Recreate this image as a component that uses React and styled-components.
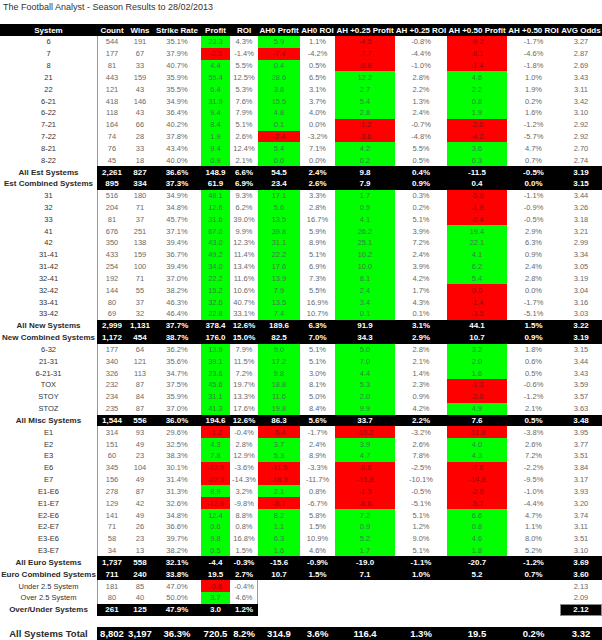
import React from 'react'
import styled, { createGlobalStyle } from 'styled-components'

const GlobalStyle = createGlobalStyle`
  body {
    margin: 0;
    background: #fff;
    font-family: "Liberation Sans", Arial, sans-serif;
  }
`

const COLS = '97px 30px 26px 48px 29px 28px 42px 35px 60px 52px 60px 53px 42px'

const HEADERS = [
  'System', 'Count', 'Wins', 'Strike Rate', 'Profit', 'ROI', 'AH0 Profit', 'AH0 ROI',
  'AH +0.25 Profit', 'AH +0.25 ROI', 'AH +0.50 Profit', 'AH +0.50 ROI', 'AVG Odds',
]

// columns that get the green / red fill
const PROFIT_COLS = [4, 6, 8, 10]

const SECTIONS = [
  {
    rows: [
      '6|544|191|35.1%|23.3|4.3%|5.9|1.1%|-4.5|-0.8%|-9.2|-1.7%|3.27',
      '7|177|67|37.9%|-2.5|-1.4%|-7.4|-4.2%|-7.7|-4.4%|-8.1|-4.6%|2.87',
      '8|81|33|40.7%|4.4|5.5%|0.4|0.5%|-0.8|-1.0%|-1.4|-1.8%|2.69',
      '21|443|159|35.9%|55.4|12.5%|28.6|6.5%|12.2|2.8%|4.6|1.0%|3.43',
      '22|121|43|35.5%|6.4|5.3%|3.8|3.1%|2.7|2.2%|2.2|1.9%|3.11',
      '6-21|418|146|34.9%|31.9|7.6%|15.5|3.7%|5.4|1.3%|0.8|0.2%|3.42',
      '6-22|118|43|36.4%|9.4|7.9%|4.8|4.0%|2.8|2.4%|1.9|1.6%|3.10',
      '7-21|164|66|40.2%|8.4|5.1%|0.1|0.0%|-1.2|-0.7%|-2.0|-1.2%|2.92',
      '7-22|74|28|37.8%|1.9|2.6%|-2.4|-3.2%|-3.6|-4.8%|-4.2|-5.7%|2.92',
      '8-21|76|33|43.4%|9.4|12.4%|5.4|7.1%|4.2|5.5%|3.6|4.7%|2.70',
      '8-22|45|18|40.0%|0.9|2.1%|0.0|0.0%|0.2|0.5%|0.3|0.7%|2.74',
    ],
    totals: [
      'All Est Systems|2,261|827|36.6%|148.9|6.6%|54.5|2.4%|9.8|0.4%|-11.5|-0.5%|3.19',
      'Est Combined Systems|895|334|37.3%|61.9|6.9%|23.4|2.6%|7.9|0.9%|0.4|0.0%|3.15',
    ],
  },
  {
    rows: [
      '31|516|180|34.9%|48.1|9.3%|17.1|3.3%|1.7|0.3%|-5.9|-1.1%|3.44',
      '32|204|71|34.8%|12.6|6.2%|5.6|2.8%|0.5|0.2%|-1.8|-0.9%|3.26',
      '33|81|37|45.7%|31.6|39.0%|13.5|16.7%|4.1|5.1%|-0.4|-0.5%|3.18',
      '41|676|251|37.1%|67.0|9.9%|39.8|5.9%|26.2|3.9%|19.4|2.9%|3.21',
      '42|350|138|39.4%|43.0|12.3%|31.1|8.9%|25.1|7.2%|22.1|6.3%|2.99',
      '31-41|433|159|36.7%|49.2|11.4%|22.2|5.1%|10.2|2.4%|4.1|0.9%|3.34',
      '31-42|254|100|39.4%|34.0|13.4%|17.6|6.9%|10.0|3.9%|6.2|2.4%|3.05',
      '32-41|192|71|37.0%|22.2|11.6%|13.9|7.3%|8.1|4.2%|5.4|2.8%|3.19',
      '32-42|144|55|38.2%|15.2|10.6%|7.9|5.5%|2.4|1.7%|-0.0|0.0%|3.04',
      '33-41|80|37|46.3%|32.6|40.7%|13.5|16.9%|3.4|4.3%|-1.4|-1.7%|3.16',
      '33-42|69|32|46.4%|22.8|33.1%|7.4|10.7%|0.1|0.1%|-3.5|-5.1%|3.03',
    ],
    totals: [
      'All New Systems|2,999|1,131|37.7%|378.4|12.6%|189.6|6.3%|91.9|3.1%|44.1|1.5%|3.22',
      'New Combined Systems|1,172|454|38.7%|176.0|15.0%|82.5|7.0%|34.3|2.9%|10.7|0.9%|3.19',
    ],
  },
  {
    rows: [
      '6-32|177|64|36.2%|13.9|7.9%|9.0|5.1%|5.0|2.8%|3.2|1.8%|3.15',
      '21-31|340|121|35.6%|39.1|11.5%|17.2|5.1%|7.0|2.1%|2.0|0.6%|3.44',
      '6-21-31|326|113|34.7%|23.6|7.2%|9.8|3.0%|4.4|1.4%|1.6|0.5%|3.43',
      'TOX|232|87|37.5%|45.6|19.7%|18.8|8.1%|5.3|2.3%|-1.3|-0.6%|3.59',
      'STOY|234|84|35.9%|31.1|13.3%|11.6|5.0%|2.0|0.9%|-2.8|-1.2%|3.57',
      'STOZ|235|87|37.0%|41.3|17.6%|19.8|8.4%|9.9|4.2%|4.9|2.1%|3.63',
    ],
    totals: [
      'All Misc Systems|1,544|556|36.0%|194.6|12.6%|86.3|5.6%|33.7|2.2%|7.6|0.5%|3.48',
    ],
  },
  {
    rows: [
      'E1|314|93|29.6%|-1.2|-0.4%|-5.4|-1.7%|-10.2|-3.2%|-11.8|-3.8%|3.95',
      'E2|151|49|32.5%|4.3|2.8%|3.7|2.4%|3.9|2.6%|4.0|2.6%|3.77',
      'E3|60|23|38.3%|7.8|12.9%|5.3|8.9%|4.7|7.8%|4.3|7.2%|3.51',
      'E6|345|104|30.1%|-12.5|-3.6%|-11.5|-3.3%|-8.6|-2.5%|-7.6|-2.2%|3.84',
      'E7|156|49|31.4%|-22.3|-14.3%|-18.3|-11.7%|-15.8|-10.1%|-14.8|-9.5%|3.17',
      'E1-E6|278|87|31.3%|8.9|3.2%|2.1|0.8%|-1.3|-0.5%|-2.9|-1.0%|3.93',
      'E1-E7|129|42|32.6%|-12.6|-9.8%|-8.7|-6.7%|-6.6|-5.1%|-5.7|-4.4%|3.20',
      'E2-E6|141|49|34.8%|12.4|8.8%|8.2|5.8%|7.2|5.1%|6.6|4.7%|3.74',
      'E2-E7|71|26|36.6%|0.6|0.8%|1.1|1.5%|0.9|1.2%|0.8|1.1%|3.11',
      'E3-E6|58|23|39.7%|9.8|16.8%|6.3|10.9%|5.2|9.0%|4.6|8.0%|3.51',
      'E3-E7|34|13|38.2%|0.5|1.5%|1.6|4.6%|1.7|5.1%|1.8|5.2%|3.10',
    ],
    totals: [
      'All Euro Systems|1,737|558|32.1%|-4.4|-0.3%|-15.6|-0.9%|-19.0|-1.1%|-20.7|-1.2%|3.69',
      'Euro Combined Systems|711|240|33.8%|19.5|2.7%|10.7|1.5%|7.1|1.0%|5.2|0.7%|3.60',
    ],
  },
]

// goal-line rows only fill the first six columns and the odds
const OU_ROWS = [
  'Under 2.5 System|181|85|47.0%|-0.6|-0.4%|2.13',
  'Over 2.5 System|80|40|50.0%|3.7|4.6%|2.09',
]
const OU_TOTAL = 'Over/Under Systems|261|125|47.9%|3.0|1.2%|2.12'

const GRAND_TOTAL = 'All Systems Total|8,802|3,197|36.3%|720.5|8.2%|314.9|3.6%|116.4|1.3%|19.5|0.2%|3.32'

const toneOf = (value) => {
  const n = parseFloat(value)
  return n < 0 || Object.is(n, -0) ? 'red' : 'green'
}
const shown = (value) => (parseFloat(value) === 0 ? '0.0' : value)

const Page = styled.div`
  width: 602px;
  height: 640px;
  overflow: hidden;
`

const Title = styled.div`
  height: 24px;
  padding: 2px 0 0 3px;
  box-sizing: border-box;
  font-size: 9px;
  line-height: 11px;
  color: #333;
`

const Table = styled.div`
  display: flex;
  flex-direction: column;
`

const Row = styled.div`
  display: grid;
  grid-template-columns: ${COLS};
  height: ${p => p.$h}px;
  margin-top: ${p => p.$gap || 0}px;
`

const HeadCell = styled.div`
  display: flex;
  align-items: center;
  justify-content: center;
  background: #000;
  color: #fff;
  font-size: 8px;
  font-weight: bold;
  white-space: nowrap;
`

const Label = styled.div`
  display: flex;
  align-items: center;
  justify-content: center;
  white-space: nowrap;
  font-size: ${p => p.$size || 7.5}px;
  font-weight: ${p => (p.$bold ? 'bold' : 'normal')};
  color: ${p => (p.$bold ? '#2a2a2a' : '#333')};
`

const Num = styled.div`
  display: flex;
  align-items: center;
  justify-content: center;
  white-space: nowrap;
  font-size: 7.5px;
  color: ${p => (p.$tone === 'green' ? '#3f7f3f' : p.$tone === 'red' ? '#8c1010' : '#6a6a6a')};
  background: ${p => (p.$tone === 'green' ? '#00ff00' : p.$tone === 'red' ? '#ff0000' : '#fff')};
  box-shadow: ${p => (p.$left ? 'inset 1px 0 #9a9a9a' : p.$right ? 'inset -1px 0 #9a9a9a' : 'none')};
`

const Dark = styled.div`
  display: flex;
  align-items: center;
  justify-content: center;
  white-space: nowrap;
  background: #000;
  color: #fff;
  font-size: ${p => p.$size || 8}px;
  font-weight: bold;
  box-shadow: ${p => (p.$framed ? 'inset 0 0 0 1px #8a8a8a' : 'none')};
`

const Blank = styled.div`
  grid-column: span ${p => p.$span};
`

const ROW_H = 11.84

const DataRow = ({ line }) => {
  const cells = line.split('|')
  return (
    <Row $h={ROW_H}>
      <Label>{cells[0]}</Label>
      {cells.slice(1).map((v, i) => {
        const col = i + 1
        const coloured = PROFIT_COLS.includes(col)
        return (
          <Num key={col} $left={col === 1} $tone={coloured ? toneOf(v) : null}>
            {coloured ? shown(v) : v}
          </Num>
        )
      })}
    </Row>
  )
}

const SumRow = ({ line, size, h, gap }) => {
  const cells = line.split('|')
  return (
    <Row $h={h || ROW_H} $gap={gap}>
      <Label $bold $size={size || 8}>{cells[0]}</Label>
      {cells.slice(1).map((v, i) => (
        <Dark key={i} $size={size}>{v}</Dark>
      ))}
    </Row>
  )
}

const GoalRow = ({ line }) => {
  const cells = line.split('|')
  return (
    <Row $h={ROW_H}>
      <Label>{cells[0]}</Label>
      <Num $left>{cells[1]}</Num>
      <Num>{cells[2]}</Num>
      <Num>{cells[3]}</Num>
      <Num $tone={toneOf(cells[4])}>{cells[4]}</Num>
      <Num $right>{cells[5]}</Num>
      <Blank $span={6} />
      <Num>{cells[6]}</Num>
    </Row>
  )
}

const GoalTotal = ({ line }) => {
  const cells = line.split('|')
  return (
    <Row $h={ROW_H}>
      <Label $bold $size={8}>{cells[0]}</Label>
      {cells.slice(1, 6).map((v, i) => (
        <Dark key={i}>{v}</Dark>
      ))}
      <Blank $span={6} />
      <Dark $framed>{cells[6]}</Dark>
    </Row>
  )
}

export default function App() {
  return (
    <Page>
      <GlobalStyle />
      <Title>The Football Analyst - Season Results to 28/02/2013</Title>
      <Table>
        <Row $h={12}>
          {HEADERS.map(h => (
            <HeadCell key={h}>{h}</HeadCell>
          ))}
        </Row>
        {SECTIONS.map((section, s) => (
          <React.Fragment key={s}>
            {section.rows.map(line => (
              <DataRow key={line} line={line} />
            ))}
            {section.totals.map(line => (
              <SumRow key={line} line={line} />
            ))}
          </React.Fragment>
        ))}
        {OU_ROWS.map(line => (
          <GoalRow key={line} line={line} />
        ))}
        <GoalTotal line={OU_TOTAL} />
        <SumRow line={GRAND_TOTAL} size={9.5} h={14} gap={11} />
      </Table>
    </Page>
  )
}
